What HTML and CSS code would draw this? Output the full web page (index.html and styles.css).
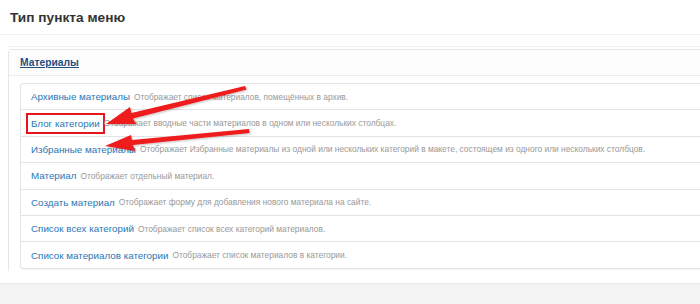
FILE: index.html
```html
<!DOCTYPE html>
<html>
  <head>
    <title>Тип пункта меню</title>
    <link rel="stylesheet" href="styles.css">
  </head>
  <body>
    <div class="modal-header">
        <h3>Тип пункта меню</h3>
    </div>
    <div class="modal-body">
        <div class="accordion">
            <div class="accordion-group">
                <div class="accordion-heading">
                    <a class="accordion-toggle" href="#">Материалы</a>
                </div>
                <div class="accordion-inner">
                    <ul class="list-group">
                        <li class="item"><a href="#" class="item-link">Архивные материалы</a> <small>Отображает список материалов, помещённых в архив.</small></li>
                        <li class="item"><a href="#" class="item-link marked">Блог категории</a> <small>Отображает вводные части материалов в одном или нескольких столбцах.</small></li>
                        <li class="item"><a href="#" class="item-link">Избранные материалы</a> <small>Отображает Избранные материалы из одной или нескольких категорий в макете, состоящем из одного или нескольких столбцов.</small></li>
                        <li class="item"><a href="#" class="item-link">Материал</a> <small>Отображает отдельный материал.</small></li>
                        <li class="item"><a href="#" class="item-link">Создать материал</a> <small>Отображает форму для добавления нового материала на сайте.</small></li>
                        <li class="item"><a href="#" class="item-link">Список всех категорий</a> <small>Отображает список всех категорий материалов.</small></li>
                        <li class="item"><a href="#" class="item-link">Список материалов категории</a> <small>Отображает список материалов в категории.</small></li>
                    </ul>
                </div>
            </div>
        </div>
    </div>
    <div class="modal-footer"></div>

    <!-- red arrows drawn over the screenshot -->
    <svg class="arrows" width="700" height="304" viewBox="0 0 700 304">
        <defs>
            <filter id="shade" x="-10%" y="-50%" width="120%" height="200%">
                <feDropShadow dx="1" dy="1" stdDeviation="1" flood-color="#000" flood-opacity="0.25"/>
            </filter>
        </defs>
        <g fill="#ee1c1c" filter="url(#shade)">
            <polygon points="245,86 246.5,89.5 133,118.5 136,124 106,124 130,107 131.5,113"/>
            <polygon points="249,129 249.5,133 133,145 135,151 105,146 131,135 132,140"/>
        </g>
    </svg>
  </body>
</html>
```

FILE: styles.css
```css
body {
  margin: 0;
  padding: 0;
  background-color: #fff;
  font-family: "Liberation Sans", Arial, sans-serif;
  color: #333;
  overflow: hidden;
}

.modal-header {
  height: 34px;
  padding-left: 10px;
  border-bottom: 1px solid #f0f0f0;
  display: flex;
  align-items: center;
}

.modal-header h3 {
  margin: 0;
  font-size: 13.7px;
  font-weight: bold;
  color: #333;
}

.modal-body {
  padding: 11px 0 0 8px;
}

.accordion {
  border-top: 1px solid #f0f0f0;
  padding-top: 2px;
}

.accordion-group {
  border: 1px solid #e6e6e6;
  border-right: none;
  border-bottom: none;
  border-radius: 4px 0 0 0;
  height: 221px;
}

.accordion-heading {
  height: 25px;
  padding-left: 11px;
  display: flex;
  align-items: center;
  border-bottom: 1px solid #ececec;
  background-color: #fdfdfd;
}

.accordion-toggle {
  font-size: 10.3px;
  font-weight: bold;
  color: #1f4f7d;
  text-decoration: underline;
}

.accordion-inner {
  padding: 7px 0 0 11px;
}

.list-group {
  list-style: none;
  margin: 0;
  padding: 0;
  border: 1px solid #e3e3e3;
  border-right: none;
  border-radius: 4px 0 0 4px;
  box-shadow: 0 1px 1px rgba(0, 0, 0, 0.05);
}

.item {
  box-sizing: border-box;
  height: 26.4px;
  padding-left: 10px;
  display: flex;
  align-items: center;
  white-space: nowrap;
  border-top: 1px solid #e3e3e3;
}

.item:first-child {
  border-top: none;
  height: 25.4px;
}

.item-link {
  font-size: 9.8px;
  color: #2a76b5;
  text-decoration: none;
  margin-right: 4px;
}

.item-link.marked {
  outline: 2px solid #e8141b;
  outline-offset: 3px;
}

.item small {
  font-size: 8.4px;
  color: #999;
}

.modal-footer {
  position: absolute;
  left: 0;
  right: 0;
  top: 283px;
  height: 21px;
  background-color: #f3f3f3;
  border-top: 1px solid #e8e8e8;
}

.arrows {
  position: absolute;
  left: 0;
  top: 0;
  pointer-events: none;
}
```
